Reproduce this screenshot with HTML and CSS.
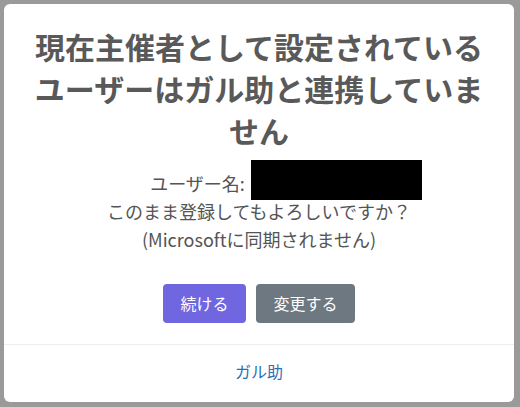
FILE: index.html
```html
<!DOCTYPE html>
<html lang="ja">
<head>
<meta charset="utf-8">
<link rel="stylesheet" href="styles.css">
</head>
<body>
<div class="backdrop">
  <div class="popup">
    <h2 class="title">現在主催者として設定されているユーザーはガル助と連携していません</h2>
    <div class="content">
      <div class="user-line">ユーザー名:<span class="redact"></span></div>
      <div>このまま登録してもよろしいですか？</div>
      <div>(Microsoftに同期されません)</div>
    </div>
    <div class="actions">
      <button class="btn btn-confirm">続ける</button>
      <button class="btn btn-cancel">変更する</button>
    </div>
    <div class="footer"><a class="footer-link">ガル助</a></div>
  </div>
</div>
</body>
</html>
```
FILE: styles.css
```css
html, body {
  margin: 0;
  padding: 0;
  height: 100%;
}
body {
  background: #9a9a9a;
  font-family: "Noto Sans CJK JP", "Noto Sans", sans-serif;
  font-size: 16px;
}
.backdrop {
  padding: 4px 6px 5px 4px;
  height: 100%;
  box-sizing: border-box;
}
.popup {
  background: #fff;
  border-radius: 6px;
  height: 398px;
  box-sizing: border-box;
  padding: 21px 0 20px;
  display: flex;
  flex-direction: column;
}
.title {
  margin: 0;
  padding: 0 30px;
  font-size: 30px;
  line-height: 42px;
  font-weight: 700;
  color: #595959;
  text-align: center;
}
.content {
  margin: 18px 25.6px 6px;
  font-size: 18px;
  line-height: 28px;
  color: #545454;
  text-align: center;
}
.user-line {
  padding-left: 54px;
}
.redact {
  display: inline-block;
  width: 171px;
  height: 40px;
  background: #000;
  margin: -9px 0 -4px 6px;
  vertical-align: top;
}
.actions {
  margin-top: 20px;
  display: flex;
  justify-content: center;
}
.btn {
  margin: 5px;
  padding: 10px 17.6px;
  border: 0;
  border-radius: 4px;
  font-family: inherit;
  font-size: 16px;
  line-height: 19px;
  color: #fff;
}
.btn-confirm {
  background: #7066e0;
}
.btn-cancel {
  background: #6e7881;
}
.footer {
  margin-top: 16px;
  padding: 16px 16px 0;
  border-top: 1px solid #eee;
  text-align: center;
  line-height: 21px;
}
.footer-link {
  color: #2a6fb8;
  text-decoration: none;
}
```
